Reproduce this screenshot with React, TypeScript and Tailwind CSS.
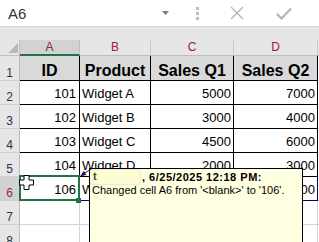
import React from "react";

const data = [
  ["101", "Widget A", "5000", "7000"],
  ["102", "Widget B", "3000", "4000"],
  ["103", "Widget C", "4500", "6000"],
  ["104", "Widget D", "2000", "3000"],
];

function RowHead({ n, sel, h }: { n: string; sel?: boolean; h: string }) {
  return (
    <div
      className={
        (sel
          ? "bg-[#d2d2d2] text-[#a3282a] "
          : "bg-[#e6e6e6] text-[#26324f] ") +
        h +
        " w-[20px] shrink-0 flex items-end justify-center border-r border-b border-r-[#bdbdbd] border-b-[#cfcfcf] text-[12px] leading-[14px]"
      }
    >
      {n}
    </div>
  );
}

export default function App() {
  return (
    <div className="relative w-[319px] h-[242px] overflow-hidden bg-white font-['Liberation_Sans',Arial,sans-serif] text-black">
      {/* formula bar */}
      <div className="h-[27px] flex border-b border-[#d4d4d4] bg-white">
        <div className="w-[176px] flex items-center justify-between pl-[8px] pr-[7px]">
          <span className="text-[15px] text-[#333] leading-none">A6</span>
          <svg width="7" height="4" viewBox="0 0 7 4">
            <polygon points="0,0 7,0 3.5,4" fill="#7a7a7a" />
          </svg>
        </div>
        <div className="w-[42px] flex items-center justify-center">
          <svg width="3" height="13" viewBox="0 0 3 13">
            <rect x="0" y="0" width="3" height="3" fill="#bdbdbd" />
            <rect x="0" y="5" width="3" height="3" fill="#bdbdbd" />
            <rect x="0" y="10" width="3" height="3" fill="#bdbdbd" />
          </svg>
        </div>
        <div className="w-[38px] flex items-center justify-center">
          <svg width="14" height="14" viewBox="0 0 14 14">
            <path d="M1 1 L13 13 M13 1 L1 13" stroke="#b4b4b4" strokeWidth="1.4" />
          </svg>
        </div>
        <div className="w-[56px] flex items-center justify-center">
          <svg width="16" height="13" viewBox="0 0 16 13">
            <path d="M1 7 L5.5 11.5 L15 1.5" stroke="#b4b4b4" strokeWidth="2.2" fill="none" />
          </svg>
        </div>
      </div>
      <div className="h-[13px] bg-[#e6e6e6]" />

      {/* column headers */}
      <div className="flex h-[16px] text-[12px] leading-[15px] text-[#9b2226] bg-[#e6e6e6]">
        <div className="w-[20px] shrink-0 flex items-end justify-end pr-[1px] pb-[2px] border-r border-b border-r-[#bdbdbd] border-b-[#bdbdbd]">
          <svg width="10" height="10" viewBox="0 0 10 10">
            <polygon points="10,0 10,10 0,10" fill="#b9b9b9" />
          </svg>
        </div>
        <div className="w-[60px] shrink-0 flex items-center justify-center bg-[#d2d2d2] border-r border-r-[#bdbdbd] border-b-2 border-b-[#217346]">A</div>
        <div className="w-[71px] shrink-0 flex items-center justify-center border-r border-b border-r-[#c8c8c8] border-b-[#bdbdbd]">B</div>
        <div className="w-[83px] shrink-0 flex items-center justify-center border-r border-b border-r-[#c8c8c8] border-b-[#bdbdbd]">C</div>
        <div className="w-[84px] shrink-0 flex items-center justify-center border-r border-b border-r-[#c8c8c8] border-b-[#bdbdbd]">D</div>
        <div className="flex-1 border-b border-b-[#bdbdbd]" />
      </div>

      {/* row 1 header */}
      <div className="flex h-[25px]">
        <RowHead n="1" h="h-[25px]" />
        <div className="w-[60px] shrink-0 bg-[#d9d9d9] border-r border-b border-black flex items-end justify-center text-[16px] font-bold leading-[19px]">ID</div>
        <div className="w-[71px] shrink-0 bg-[#d9d9d9] border-r border-b border-black flex items-end justify-center text-[16px] font-bold leading-[19px]">Product</div>
        <div className="w-[83px] shrink-0 bg-[#d9d9d9] border-r border-b border-black flex items-end justify-center text-[16px] font-bold leading-[19px]">Sales Q1</div>
        <div className="w-[84px] shrink-0 bg-[#d9d9d9] border-r border-b border-black flex items-end justify-center text-[16px] font-bold leading-[19px]">Sales Q2</div>
        <div className="flex-1 border-b border-[#d4d4d4]" />
      </div>

      {data.map((r, i) => (
        <div key={i} className="flex h-[24px] text-[13px] leading-[15px]">
          <RowHead n={String(i + 2)} h="h-[24px]" />
          <div className="w-[60px] shrink-0 border-r border-b border-black flex items-end justify-end pr-[3px] pb-[3px]">{r[0]}</div>
          <div className="w-[71px] shrink-0 border-r border-b border-black flex items-end justify-start pl-[2px] pb-[3px]">{r[1]}</div>
          <div className="w-[83px] shrink-0 border-r border-b border-black flex items-end justify-end pr-[2px] pb-[3px]">{r[2]}</div>
          <div className="w-[84px] shrink-0 border-r border-b border-black flex items-end justify-end pr-[2px] pb-[3px]">{r[3]}</div>
          <div className="flex-1 border-b border-[#d4d4d4]" />
        </div>
      ))}

      {/* row 6 */}
      <div className="flex h-[24px] text-[13px] leading-[15px]">
        <RowHead n="6" sel h="h-[24px]" />
        <div className="relative w-[60px] shrink-0 border-r border-b border-r-[#000080] border-b-[#d4d4d4] flex items-end justify-end pr-[3px] pb-[3px]">
          106
          <div className="absolute -left-[1px] -top-[2px] -right-[1px] -bottom-[1px] border-2 border-[#217346]" />
          <div className="absolute -right-[2px] -bottom-[3px] w-[5px] h-[5px] bg-[#217346]" />
        </div>
        <div className="w-[71px] shrink-0 border-r border-b border-r-[#d4d4d4] border-b-[#000080] flex items-end justify-start pl-[2px] pb-[3px]">Widget E</div>
        <div className="w-[83px] shrink-0 border-r border-b border-r-[#d4d4d4] border-b-[#000080] flex items-end justify-end pr-[2px] pb-[3px]">3500</div>
        <div className="w-[84px] shrink-0 border-r border-b border-r-[#000080] border-b-[#000080] flex items-end justify-end pr-[2px] pb-[3px]">5000</div>
        <div className="flex-1 border-b border-[#d4d4d4]" />
      </div>

      {["7", "8"].map((n) => (
        <div key={n} className="flex h-[24px]">
          <RowHead n={n} h="h-[24px]" />
          <div className="w-[60px] shrink-0 border-r border-b border-[#d4d4d4]" />
          <div className="w-[71px] shrink-0 border-r border-b border-[#d4d4d4]" />
          <div className="w-[83px] shrink-0 border-r border-b border-[#d4d4d4]" />
          <div className="w-[84px] shrink-0 border-r border-b border-[#d4d4d4]" />
          <div className="flex-1 border-b border-[#d4d4d4]" />
        </div>
      ))}

      {/* comment box */}
      <div className="absolute left-[89px] top-[168px] w-[214px] h-[90px] bg-[#ffffe1] border border-black pl-[2px] pt-[1px] text-[11px] leading-[13px]">
        <div className="flex items-center font-bold tracking-[0.5px] whitespace-nowrap">
          <span className="w-[50px] h-[14px] -ml-[2px] pl-[3px] mr-[2px] rounded-[2px] bg-[#fefcd4] shadow-[0_0_2px_rgba(0,0,0,0.3)] text-[#444]">t</span>
          <span>, 6/25/2025 12:18 PM:</span>
        </div>
        <div className="whitespace-nowrap">Changed cell A6 from '&lt;blank&gt;' to '106'.</div>
      </div>

      {/* arrow from comment to cell */}
      <svg className="absolute left-0 top-0" width="319" height="242" viewBox="0 0 319 242" pointerEvents="none">
        <line x1="92" y1="168.5" x2="83" y2="174.2" stroke="#222" strokeWidth="1" />
        <polygon points="80,176.5 86.4,175 83.8,170.8" fill="#1a1a60" />
      </svg>

      {/* cursor */}
      <svg className="absolute left-[19px] top-[175px]" width="15" height="15" viewBox="0 0 15 15">
        <path d="M5 0.5 H10 V5 H14.5 V10 H10 V14.5 H5 V10 H0.5 V5 H5 Z" fill="#fff" stroke="#000" strokeWidth="1" />
      </svg>
    </div>
  );
}
